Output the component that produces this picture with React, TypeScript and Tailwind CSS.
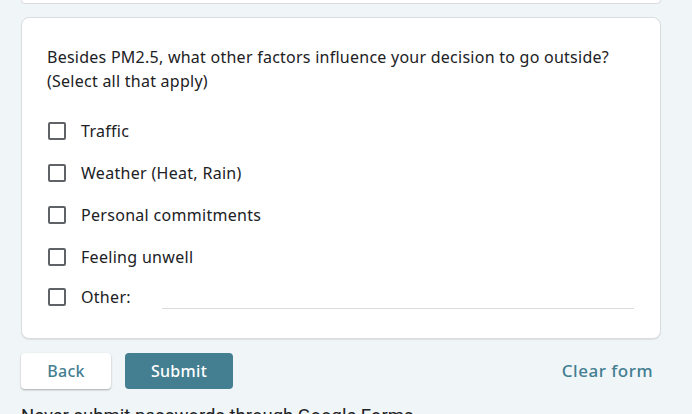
import React from "react";

const options = ["Traffic", "Weather (Heat, Rain)", "Personal commitments", "Feeling unwell"];

function Box() {
  return <div className="w-[18px] h-[18px] shrink-0 rounded-[2px] border-2 border-[#5f6368] bg-white" />;
}

export default function App() {
  return (
    <div className="w-[692px] h-[414px] overflow-hidden bg-[#f0f5f8] text-[#202124]" style={{ fontFamily: "'Noto Sans', sans-serif" }}>
      <div className="ml-[21px] w-[640px]">
        <div className="h-[4px] bg-white border-x border-b border-[#dadce0] rounded-b-[8px]" />
        <div className="mt-[13px] h-[322px] bg-white border border-[#dadce0] rounded-[8px] shadow-[0_1px_1px_rgba(0,0,0,0.08)] pl-[25px] pr-[26px] pt-[27px]">
          <div className="text-[16px] leading-[24px] tracking-[0.25px]">
            Besides PM2.5, what other factors influence your decision to go outside?
            <br />
            (Select all that apply)
          </div>
          <div className="mt-[17px] flex flex-col">
            {options.map((o) => (
              <div key={o} className="flex items-center h-[42px] pl-[1px]">
                <Box />
                <span className="ml-[15px] text-[16px] leading-[20px] tracking-[0.3px]">{o}</span>
              </div>
            ))}
            <div className="flex items-center h-[38px] pl-[1px]">
              <Box />
              <span className="ml-[15px] text-[16px] leading-[20px] tracking-[0.3px] w-[81px]">Other:</span>
              <div className="flex-1 self-end mb-[7px] border-b border-[#dadce0]" />
            </div>
          </div>
        </div>
        <div className="mt-[14px] flex items-center justify-between">
          <div className="flex gap-[14px]">
            <button className="w-[90px] h-[36px] rounded-[4px] bg-white text-[#437e91] text-[16px] font-medium tracking-[0.3px] shadow-[0_1px_2px_rgba(0,0,0,0.3)]">Back</button>
            <button className="w-[108px] h-[36px] rounded-[4px] bg-[#437e91] text-white text-[16px] font-medium tracking-[0.3px]">Submit</button>
          </div>
          <button className="mr-[8px] text-[#437e91] text-[17px] font-medium tracking-[0.5px]">Clear form</button>
        </div>
        <div className="mt-[15px] text-[18.5px] leading-[24px]" style={{ fontFamily: "Roboto, sans-serif" }}>
          Never submit passwords through Google Forms.
        </div>
      </div>
    </div>
  );
}
